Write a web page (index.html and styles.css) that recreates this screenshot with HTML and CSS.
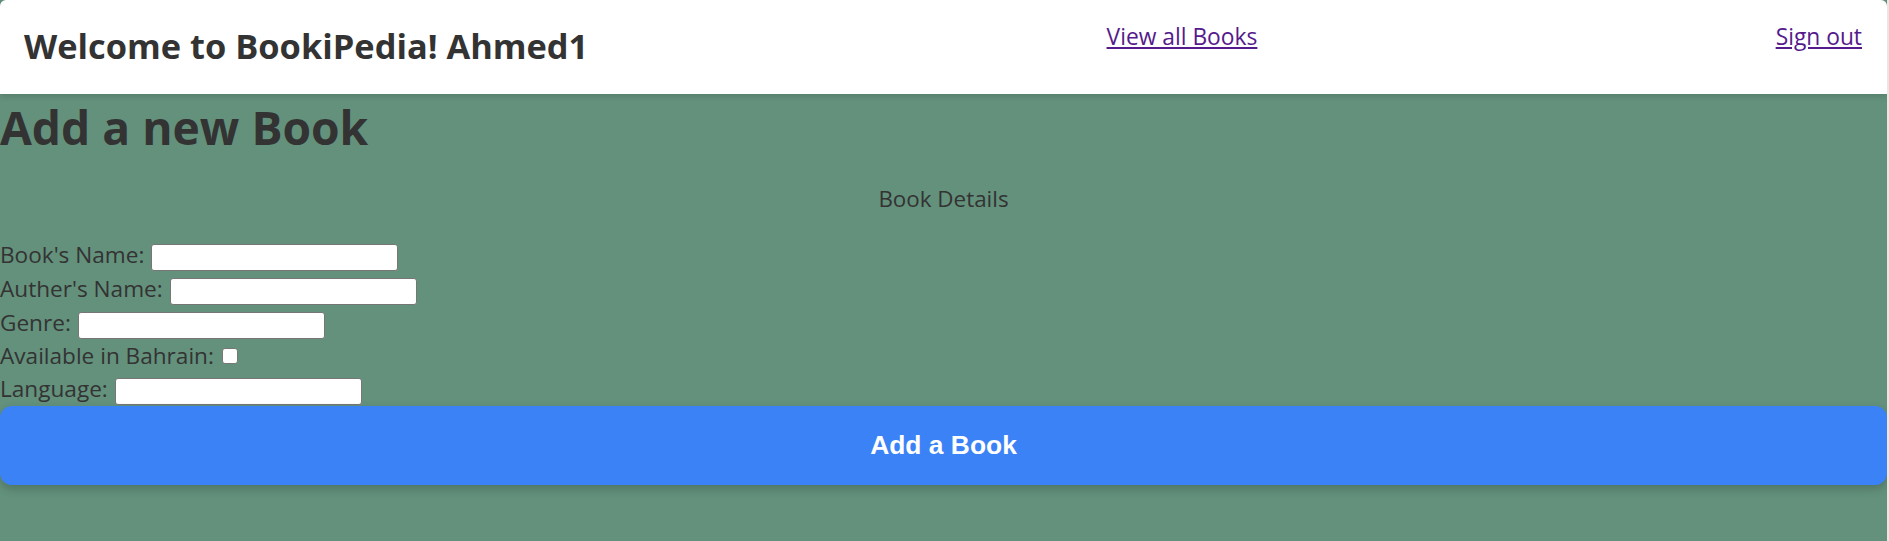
FILE: index.html
```html
<!DOCTYPE html>
<html lang="en">
<head>
<meta charset="utf-8">
<title>BookiPedia - Add a new Book</title>
<link rel="stylesheet" href="styles.css">
</head>
<body>
<header class="topbar">
  <h2 class="brand">Welcome to BookiPedia! Ahmed1</h2>
  <a href="#" class="nav-link">View all Books</a>
  <a href="#" class="nav-link">Sign out</a>
</header>
<main class="page">
  <h1 class="page-title">Add a new Book</h1>
  <form class="book-form">
    <p class="form-caption">Book Details</p>
    <div class="field"><label class="field-label">Book's Name:</label><input class="text-input" type="text"></div>
    <div class="field"><label class="field-label">Auther's Name:</label><input class="text-input" type="text"></div>
    <div class="field"><label class="field-label">Genre:</label><input class="text-input" type="text"></div>
    <div class="field field-check"><label class="field-label">Available in Bahrain:</label><input class="check-input" type="checkbox"></div>
    <div class="field"><label class="field-label">Language:</label><input class="text-input" type="text"></div>
    <button type="button" class="submit">Add a Book</button>
  </form>
</main>
</body>
</html>
```

FILE: styles.css
```css
html {
  background: #efe3e3;
}

body {
  margin: 0 2px 0 0;
  min-height: 541px;
  background: #63917c;
  color: #333333;
  font-family: "Open Sans", "Noto Sans", sans-serif;
}

.topbar {
  position: relative;
  z-index: 1;
  display: flex;
  justify-content: space-between;
  align-items: flex-start;
  height: 94px;
  box-sizing: border-box;
  padding: 0 25px 0 24px;
  background: #ffffff;
  border-radius: 6px 6px 0 0;
  box-shadow: 0 2px 6px rgba(0, 0, 0, 0.15);
}

.brand {
  margin: 22px 0 0;
  font-size: 34.4px;
  line-height: 48px;
  font-weight: 700;
}

.nav-link {
  margin-top: 21px;
  font-size: 22.8px;
  line-height: 32px;
  color: #551a8b;
}

.page-title {
  margin: 2px 0 0;
  font-size: 46.2px;
  line-height: 64px;
  font-weight: 700;
}

.book-form {
  display: flex;
  flex-direction: column;
}

.form-caption {
  margin: 23px 0 25px;
  text-align: center;
  font-size: 22.4px;
  line-height: 32px;
}

.field {
  display: flex;
  align-items: center;
  height: 34px;
}

.field-check {
  height: 32px;
}

.field-label {
  padding-bottom: 4px;
  font-size: 22.6px;
  line-height: 32px;
}

.text-input {
  width: 247px;
  height: 27px;
  box-sizing: border-box;
  margin: 0 0 0 7px;
  padding: 0 4px;
  border: 1px solid #767676;
  border-radius: 3px;
  background: #ffffff;
}

.check-input {
  appearance: none;
  width: 16px;
  height: 16px;
  box-sizing: border-box;
  margin: 0 0 4px 8px;
  border: 1px solid #767676;
  border-radius: 3px;
  background: #ffffff;
}

.submit {
  display: block;
  width: 100%;
  height: 79px;
  margin: -2px 0 0;
  border: none;
  border-radius: 12px;
  background: #3b82f6;
  color: #ffffff;
  font-family: "Liberation Sans", Arial, sans-serif;
  font-size: 26.4px;
  font-weight: 700;
  box-shadow: 0 4px 10px rgba(0, 0, 0, 0.2);
}
```
